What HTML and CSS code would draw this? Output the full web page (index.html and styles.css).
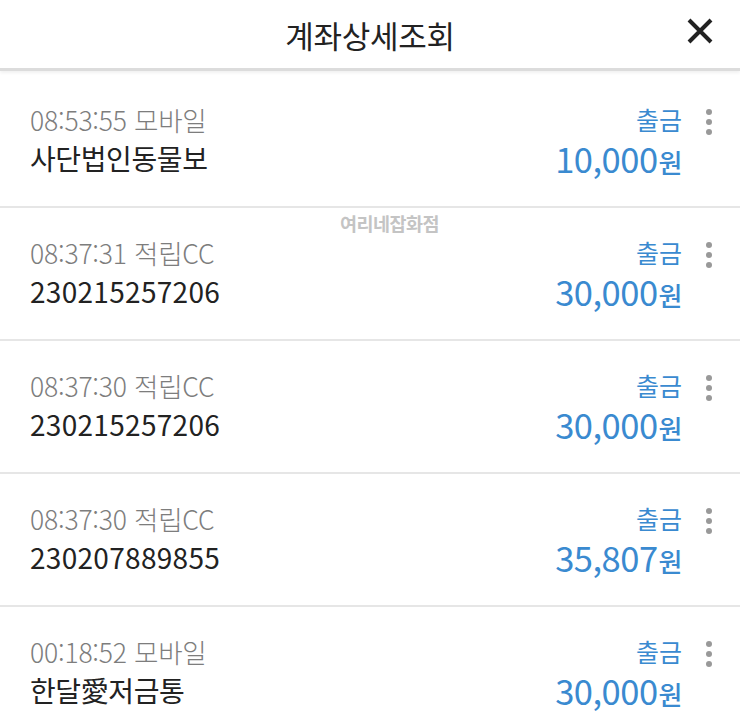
FILE: index.html
```html
<!DOCTYPE html>
<html lang="ko">
<head>
    <meta charset="UTF-8">
    <meta name="viewport" content="width=device-width, initial-scale=1.0">
    <title>계좌상세조회</title>
    <link rel="stylesheet" href="styles.css">
</head>
<body>
    <header class="top-bar">
        <h1>계좌상세조회</h1>
        <button class="close-btn" aria-label="닫기">
            <svg width="26" height="26" viewBox="0 0 26 26">
                <path d="M2 2 L24 24 M24 2 L2 24" stroke="#222" stroke-width="4"/>
            </svg>
        </button>
    </header>

    <ul class="tx-list">
        <li class="tx-row">
            <div class="tx-left">
                <div class="tx-meta">08:53:55 모바일</div>
                <div class="tx-name">사단법인동물보</div>
            </div>
            <div class="tx-right">
                <div class="tx-type">출금</div>
                <div class="tx-amount">10,000<span class="won">원</span></div>
            </div>
            <span class="more"><i></i><i></i><i></i></span>
        </li>
        <li class="tx-row">
            <span class="watermark">여리네잡화점</span>
            <div class="tx-left">
                <div class="tx-meta">08:37:31 적립CC</div>
                <div class="tx-name num">230215257206</div>
            </div>
            <div class="tx-right">
                <div class="tx-type">출금</div>
                <div class="tx-amount">30,000<span class="won">원</span></div>
            </div>
            <span class="more"><i></i><i></i><i></i></span>
        </li>
        <li class="tx-row">
            <div class="tx-left">
                <div class="tx-meta">08:37:30 적립CC</div>
                <div class="tx-name num">230215257206</div>
            </div>
            <div class="tx-right">
                <div class="tx-type">출금</div>
                <div class="tx-amount">30,000<span class="won">원</span></div>
            </div>
            <span class="more"><i></i><i></i><i></i></span>
        </li>
        <li class="tx-row">
            <div class="tx-left">
                <div class="tx-meta">08:37:30 적립CC</div>
                <div class="tx-name num">230207889855</div>
            </div>
            <div class="tx-right">
                <div class="tx-type">출금</div>
                <div class="tx-amount">35,807<span class="won">원</span></div>
            </div>
            <span class="more"><i></i><i></i><i></i></span>
        </li>
        <li class="tx-row">
            <div class="tx-left">
                <div class="tx-meta">00:18:52 모바일</div>
                <div class="tx-name">한달愛저금통</div>
            </div>
            <div class="tx-right">
                <div class="tx-type">출금</div>
                <div class="tx-amount">30,000<span class="won">원</span></div>
            </div>
            <span class="more"><i></i><i></i><i></i></span>
        </li>
    </ul>
</body>
</html>
```

FILE: styles.css
```css
body {
    margin: 0;
    background-color: #fff;
    font-family: "Noto Sans CJK KR", "Noto Sans", sans-serif;
    overflow: hidden;
}
.top-bar {
    height: 68px;
    display: flex;
    align-items: center;
    justify-content: center;
    position: relative;
    border-bottom: 3px solid #dcdcdc;
    box-shadow: 0 2px 3px rgba(0, 0, 0, 0.06);
}
.top-bar h1 {
    margin: 0;
    font-size: 31px;
    font-weight: 400;
    color: #222;
    letter-spacing: -0.3px;
}
.close-btn {
    position: absolute;
    right: 27px;
    top: 18px;
    background: none;
    border: none;
    padding: 0;
    width: 26px;
    height: 26px;
}
.tx-list {
    list-style: none;
    margin: 4px 0 0;
    padding: 0;
}
.tx-row {
    position: relative;
    height: 133px;
    box-sizing: border-box;
    padding: 26px 58px 0 30px;
    display: flex;
    justify-content: space-between;
    border-bottom: 2px solid #e6e6e6;
}
.tx-meta {
    font-size: 26.5px;
    line-height: 37px;
    font-weight: 300;
    color: #7d7d7d;
    letter-spacing: -0.2px;
}
.tx-name {
    font-size: 28px;
    line-height: 40px;
    color: #222;
    letter-spacing: -0.4px;
}
.tx-name.num {
    letter-spacing: 0.3px;
}
.tx-right {
    text-align: right;
}
.tx-type {
    font-size: 25px;
    line-height: 37px;
    color: #3a8ad0;
}
.tx-amount {
    font-size: 34.5px;
    line-height: 40px;
    color: #3a8ad0;
    letter-spacing: -0.5px;
}
.won {
    font-size: 26px;
    font-weight: 500;
    margin-left: 1px;
}
.more {
    position: absolute;
    right: 28px;
    top: 34px;
    display: flex;
    flex-direction: column;
    gap: 4px;
}
.more i {
    display: block;
    width: 6px;
    height: 6px;
    border-radius: 50%;
    background-color: #999;
}
.watermark {
    position: absolute;
    top: 2px;
    left: 340px;
    font-size: 18.5px;
    font-weight: 700;
    color: #c4c4c4;
    letter-spacing: -0.5px;
}
```
